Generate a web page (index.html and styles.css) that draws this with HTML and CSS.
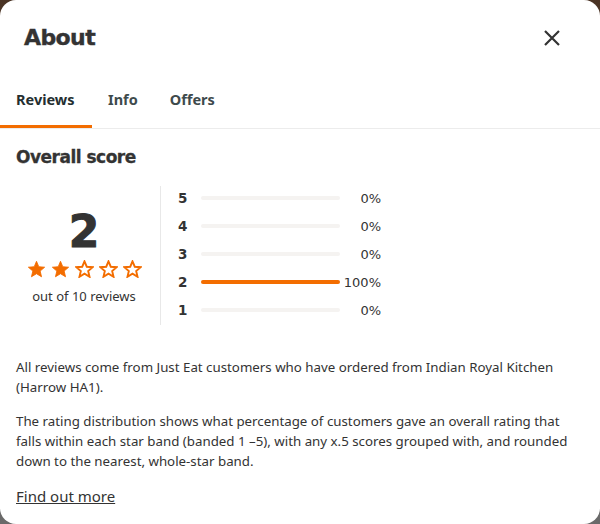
FILE: index.html
```html
<!DOCTYPE html>
<html lang="en">
<head>
<meta charset="utf-8">
<link rel="stylesheet" href="styles.css">
</head>
<body>
<div class="modal">
  <header class="head">
    <h1 class="title">About</h1>
    <button class="close" aria-label="Close">
      <svg width="16" height="16" viewBox="0 0 16 16"><path d="M1 1L15 15M15 1L1 15" stroke="#333" stroke-width="2.2" fill="none"/></svg>
    </button>
  </header>
  <nav class="tabs">
    <span class="tab active">Reviews</span>
    <span class="tab">Info</span>
    <span class="tab">Offers</span>
  </nav>
  <section class="content">
    <h2 class="section-title">Overall score</h2>
    <div class="score">
      <div class="summary">
        <div class="big">2</div>
        <div class="stars">
          <svg class="star" viewBox="-1 -1 22 21"><path class="full" d="M10 0.5L12.65 6.86L19.51 7.41L14.28 11.89L15.88 18.59L10 15L4.12 18.59L5.72 11.89L0.49 7.41L7.35 6.86Z"/></svg>
          <svg class="star" viewBox="-1 -1 22 21"><path class="full" d="M10 0.5L12.65 6.86L19.51 7.41L14.28 11.89L15.88 18.59L10 15L4.12 18.59L5.72 11.89L0.49 7.41L7.35 6.86Z"/></svg>
          <svg class="star" viewBox="-1 -1 22 21"><path class="empty" d="M10 0.5L12.65 6.86L19.51 7.41L14.28 11.89L15.88 18.59L10 15L4.12 18.59L5.72 11.89L0.49 7.41L7.35 6.86Z"/></svg>
          <svg class="star" viewBox="-1 -1 22 21"><path class="empty" d="M10 0.5L12.65 6.86L19.51 7.41L14.28 11.89L15.88 18.59L10 15L4.12 18.59L5.72 11.89L0.49 7.41L7.35 6.86Z"/></svg>
          <svg class="star" viewBox="-1 -1 22 21"><path class="empty" d="M10 0.5L12.65 6.86L19.51 7.41L14.28 11.89L15.88 18.59L10 15L4.12 18.59L5.72 11.89L0.49 7.41L7.35 6.86Z"/></svg>
        </div>
        <div class="count">out of 10 reviews</div>
      </div>
      <div class="bars">
        <div class="row"><span class="num">5</span><span class="track"><span class="fill" style="width:0%"></span></span><span class="pct">0%</span></div>
        <div class="row"><span class="num">4</span><span class="track"><span class="fill" style="width:0%"></span></span><span class="pct">0%</span></div>
        <div class="row"><span class="num">3</span><span class="track"><span class="fill" style="width:0%"></span></span><span class="pct">0%</span></div>
        <div class="row"><span class="num">2</span><span class="track"><span class="fill" style="width:100%"></span></span><span class="pct">100%</span></div>
        <div class="row"><span class="num">1</span><span class="track"><span class="fill" style="width:0%"></span></span><span class="pct">0%</span></div>
      </div>
    </div>
    <p class="text first">All reviews come from Just Eat customers who have ordered from Indian Royal Kitchen (Harrow HA1).</p>
    <p class="text">The rating distribution shows what percentage of customers gave an overall rating that falls within each star band (banded 1 –5), with any x.5 scores grouped with, and rounded down to the nearest, whole-star band.</p>
    <a class="more" href="#">Find out more</a>
  </section>
</div>
</body>
</html>
```

FILE: styles.css
```css
html, body { margin: 0; padding: 0; }
body {
  width: 600px;
  height: 524px;
  overflow: hidden;
  background: linear-gradient(180deg, #4a3324 0%, #5a5048 40%, #6a6a6a 100%);
  font-family: "Noto Sans", "Liberation Sans", sans-serif;
  color: #333;
}
.modal {
  width: 600px;
  height: 524px;
  background: #fff;
  border-radius: 16px;
  overflow: hidden;
}
.head {
  display: flex;
  align-items: center;
  justify-content: space-between;
  padding: 20px 40px 0 24px;
  height: 36px;
}
.title {
  margin: 0;
  font-family: "DejaVu Sans", sans-serif;
  font-weight: 700;
  font-size: 22px;
  line-height: 36px;
  letter-spacing: -0.6px;
  color: #333;
  -webkit-text-stroke: 0.4px #333;
}
.close {
  border: 0;
  background: none;
  padding: 0;
  width: 16px;
  height: 16px;
  display: flex;
}
.tabs {
  display: flex;
  margin-top: 24px;
  border-bottom: 1px solid #ececec;
}
.tab {
  font-family: "Noto Sans", sans-serif;
  font-weight: 700;
  font-size: 14.5px;
  color: #3e4a4c;
  padding: 0 16px 6px;
  line-height: 39px;
  border-bottom: 3px solid transparent;
}
.tab.active {
  color: #242e30;
  border-bottom-color: #f36d00;
  width: 60px;
}
.content {
  padding: 0 16px;
}
.section-title {
  margin: 16px 0 0;
  font-family: "DejaVu Sans", sans-serif;
  font-weight: 700;
  font-size: 17px;
  letter-spacing: -0.5px;
  line-height: 24px;
  color: #333;
  -webkit-text-stroke: 0.3px #333;
}
.score {
  display: flex;
  margin-top: 17px;
}
.summary {
  width: 136px;
  margin-right: 8px;
  display: flex;
  flex-direction: column;
  align-items: center;
  padding-top: 24px;
}
.big {
  font-family: "DejaVu Sans", sans-serif;
  font-weight: 700;
  font-size: 44px;
  line-height: 44px;
  color: #333;
  -webkit-text-stroke: 1px #333;
}
.stars {
  display: flex;
  gap: 5px;
  margin-top: 6px;
}
.star { width: 19px; height: 18px; display: block; }
.star .full { fill: #f36d00; stroke: #f36d00; stroke-width: 1; stroke-linejoin: round; }
.star .empty { fill: none; stroke: #f36d00; stroke-width: 2.2; stroke-linejoin: miter; }
.count {
  font-size: 13px;
  line-height: 18px;
  margin-top: 9px;
  color: #333;
}
.bars {
  border-left: 1px solid #e8e8e8;
  padding: 0 0 3px 17px;
  display: flex;
  flex-direction: column;
  gap: 4px;
}
.row {
  display: flex;
  align-items: center;
  height: 24px;
}
.num {
  width: 23px;
  font-family: "DejaVu Sans", sans-serif;
  font-weight: 700;
  font-size: 13.5px;
  color: #333;
}
.track {
  width: 139px;
  height: 4px;
  border-radius: 2px;
  background: #f5f3f1;
  display: block;
}
.fill {
  display: block;
  height: 4px;
  border-radius: 2px;
  background: #f36d00;
}
.pct {
  width: 41px;
  text-align: right;
  font-family: "DejaVu Sans", sans-serif;
  font-size: 13px;
  color: #333;
}
.text {
  margin: 14px 0 0;
  font-size: 13.3px;
  line-height: 20px;
  color: #333;
}
.text.first { margin-top: 32px; }
.more {
  display: inline-block;
  margin-top: 15px;
  font-size: 15px;
  line-height: 20px;
  color: #333;
  text-decoration: underline;
}
```
